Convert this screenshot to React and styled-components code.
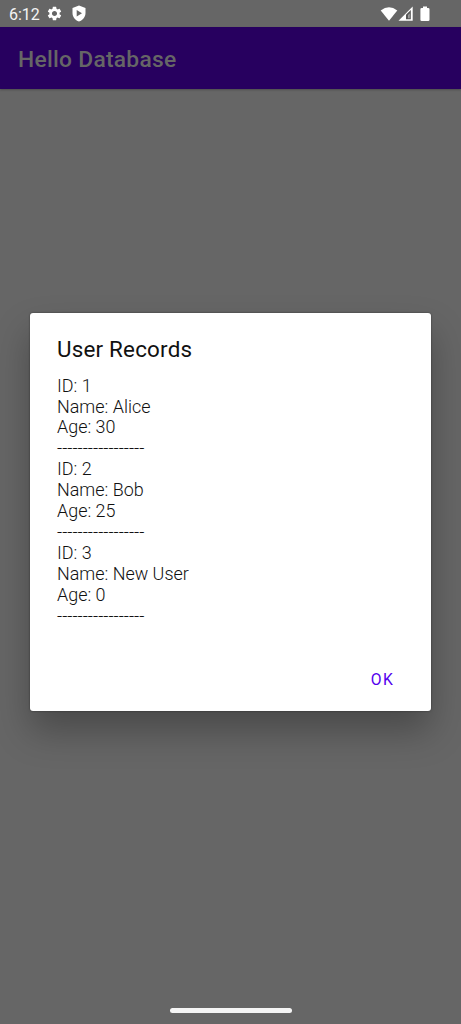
import React from "react";
import styled, { createGlobalStyle } from "styled-components";
import { MdSettings } from "react-icons/md";

const GlobalStyle = createGlobalStyle`
  * { box-sizing: border-box; }
  body { margin: 0; background: #666; font-family: Roboto, "Liberation Sans", sans-serif; }
`;

const Screen = styled.div`
  height: 1024px;
  display: flex;
  flex-direction: column;
  background: #666;
  overflow: hidden;
`;

const StatusBar = styled.div`
  height: 27px;
  flex: none;
  display: flex;
  align-items: center;
  padding: 0 29px 0 9px;
  color: #fff;
`;

const Clock = styled.span`
  font-size: 16px;
  line-height: 27px;
  width: 37px;
  padding-top: 1px;
  color: #f4f4f4;
`;

const Gear = styled(MdSettings)`
  width: 17px;
  height: 17px;
`;

const Shield = styled.svg`
  width: 14px;
  height: 17px;
  margin-left: 9px;
`;

const Signals = styled.svg`
  width: 52px;
  height: 18px;
  margin-left: auto;
`;

const AppBar = styled.header`
  height: 62px;
  flex: none;
  display: flex;
  align-items: center;
  padding: 2px 18px 0;
  background: #27005f;
  box-shadow: 0 1px 2px rgba(0, 0, 0, 0.25);
`;

const AppTitle = styled.h1`
  margin: 0;
  font-size: 22.8px;
  font-weight: 500;
  letter-spacing: 0.27px;
  color: #666;
`;

const Content = styled.main`
  flex: 1;
  padding: 224px 30px 0 29.5px;
`;

const Dialog = styled.section`
  height: 398px;
  display: flex;
  flex-direction: column;
  padding: 21px 27.5px 9px;
  background: #fff;
  border-radius: 3px;
  box-shadow: 0 0 2px rgba(0, 0, 0, 0.5), 0 20px 36px rgba(0, 0, 0, 0.28);
`;

const DialogTitle = styled.h2`
  margin: 0 0 11px;
  font-size: 22.4px;
  line-height: 30px;
  font-weight: 450;
  letter-spacing: 0.2px;
  color: #111;
`;

const Records = styled.div`
  flex: 1;
  padding-top: 0.6px;
  font-size: 17.95px;
  font-weight: 350;
  line-height: 20.93px;
  color: #111;
`;

const Line = styled.div`
  white-space: nowrap;
`;

const Actions = styled.div`
  display: flex;
  justify-content: flex-end;
`;

const TextButton = styled.button`
  width: 72px;
  height: 44px;
  margin-right: -15px;
  padding: 0;
  border: 0;
  background: none;
  font: 450 15.7px/44px Roboto, sans-serif;
  letter-spacing: 1.4px;
  color: #5300ee;
`;

const GestureArea = styled.footer`
  height: 17px;
  flex: none;
  display: flex;
  justify-content: center;
`;

const GestureHandle = styled.div`
  width: 122px;
  height: 5px;
  margin-top: 1px;
  border-radius: 3px;
  background: #f5f5f5;
`;

const users = [
  { id: 1, name: "Alice", age: 30 },
  { id: 2, name: "Bob", age: 25 },
  { id: 3, name: "New User", age: 0 },
];

export default function App() {
  return (
    <>
      <GlobalStyle />
      <Screen>
        <StatusBar>
          <Clock>6:12</Clock>
          <Gear />
          <Shield viewBox="0 0 14 17">
            <path fill="#fff" fillRule="evenodd" d="M7 .5 13.500 3v5c0 4-2.600 7.100-6.500 8.500C3.100 15.100.5 12 .5 8V3L7 .5ZM4.700 5v6.400L10 8.200 4.700 5Z" />
          </Shield>
          <Signals viewBox="0 0 52 18">
            <path fill="#fff" d="M.7 5.500Q9 -1 17.300 5.500L9 15.800Z" />
            <path fill="#fff" d="M18.500 15.700 32.700 1.500V15.700Z" />
            <path fill="#555" d="M26 9.800 30.800 5V14.200H26Z" />
            <path fill="#999" d="M28 10 29.800 8.200V13.200H28Z" />
            <path fill="#fff" d="M43 1.500h4v1.400h1.200q1.300 0 1.300 1.300v10.500q0 1.300-1.300 1.300h-6.500q-1.300 0-1.300-1.300v-10.500q0-1.300 1.300-1.300h1.300Z" />
          </Signals>
        </StatusBar>
        <AppBar>
          <AppTitle>Hello Database</AppTitle>
        </AppBar>
        <Content>
          <Dialog role="dialog">
            <DialogTitle>User Records</DialogTitle>
            <Records>
              {users.map((user) => (
                <React.Fragment key={user.id}>
                  <Line>ID: {user.id}</Line>
                  <Line>Name: {user.name}</Line>
                  <Line>Age: {user.age}</Line>
                  <Line>-----------------</Line>
                </React.Fragment>
              ))}
            </Records>
            <Actions>
              <TextButton>OK</TextButton>
            </Actions>
          </Dialog>
        </Content>
        <GestureArea>
          <GestureHandle />
        </GestureArea>
      </Screen>
    </>
  );
}
